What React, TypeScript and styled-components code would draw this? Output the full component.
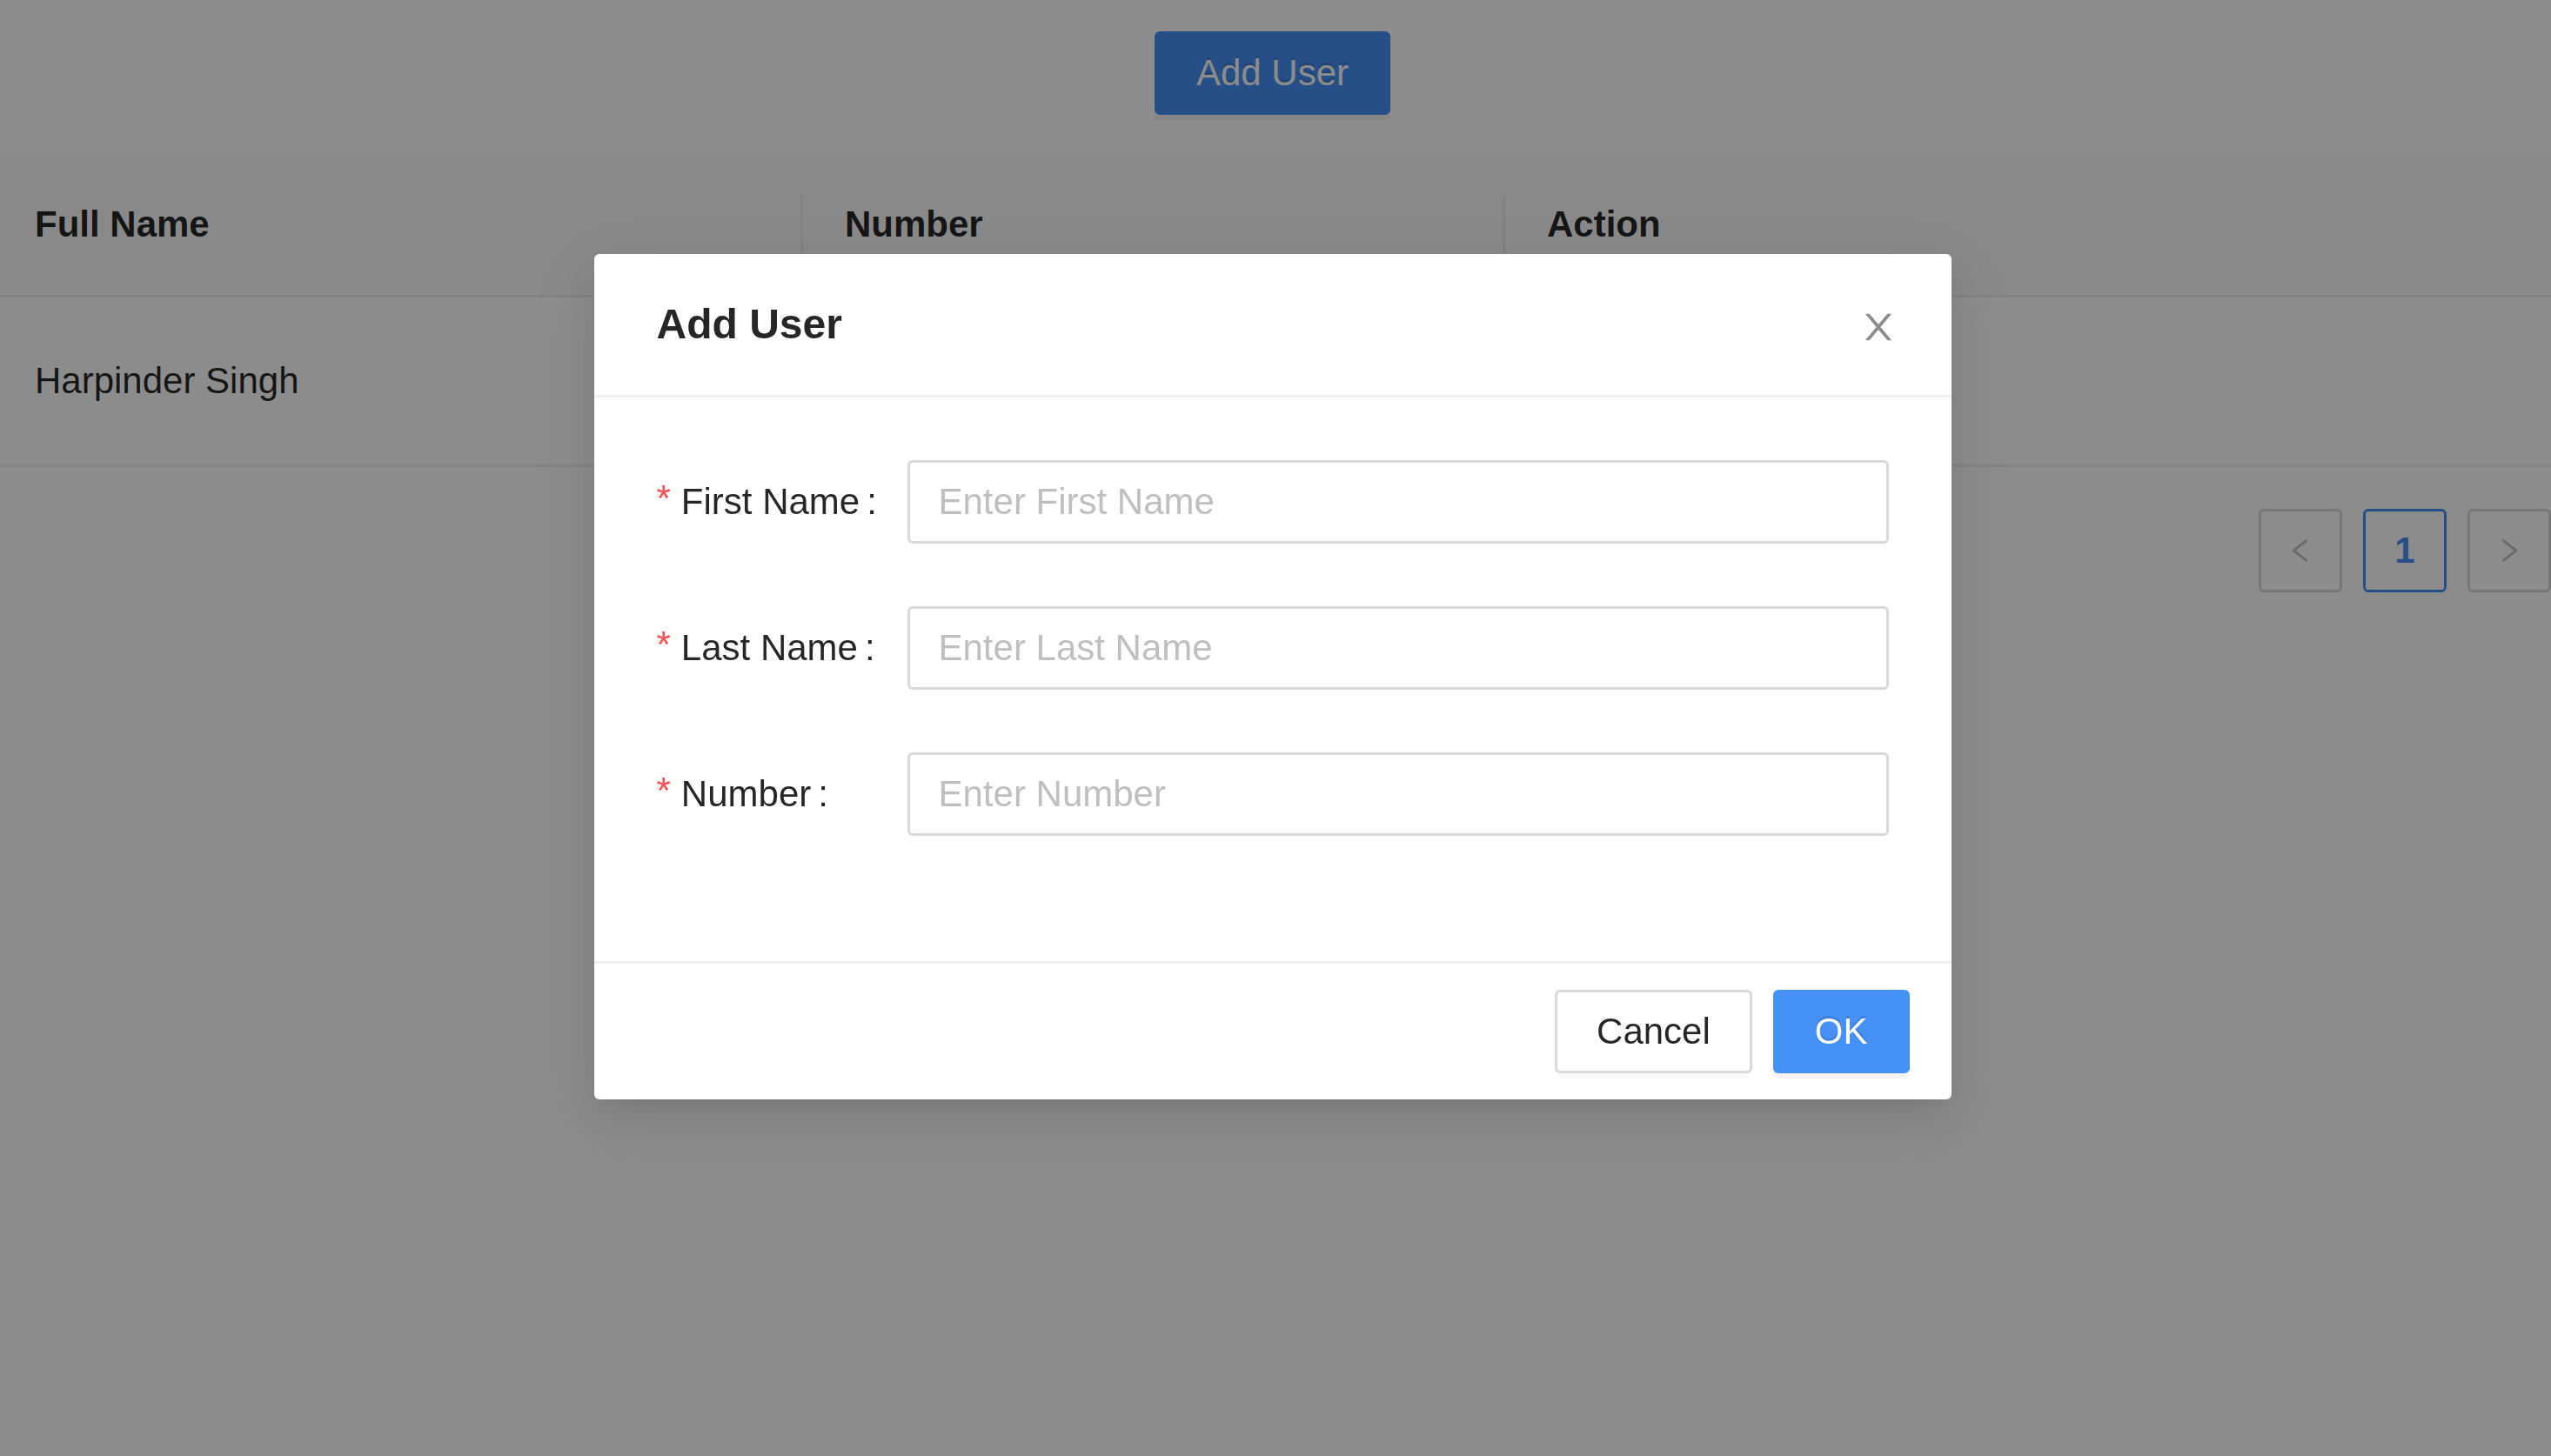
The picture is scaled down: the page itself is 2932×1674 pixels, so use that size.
import React from "react";
import styled, { createGlobalStyle } from "styled-components";

const PRIMARY = "#4691f6";

const GlobalStyle = createGlobalStyle`
  html, body {
    margin: 0;
    padding: 0;
    background: #ffffff;
  }
  body {
    font-family: "Liberation Sans", Arial, Helvetica, sans-serif;
    font-size: 42px;
    line-height: 1.5715;
    color: rgba(0, 0, 0, 0.85);
    overflow: hidden;
  }
  * { box-sizing: border-box; }
`;

const Page = styled.div`
  width: 100%;
  min-height: 100vh;
  background: #ffffff;
`;

const TopBar = styled.div`
  display: flex;
  justify-content: center;
  padding: 36px 7px 0 0;
  margin-bottom: 45px;
`;

const Button = styled.button<{ $primary?: boolean }>`
  height: 96px;
  padding: 0 45px;
  font-family: inherit;
  font-size: 42px;
  line-height: 1;
  border-radius: 6px;
  border: 3px solid ${(p) => (p.$primary ? PRIMARY : "#d9d9d9")};
  background: ${(p) => (p.$primary ? PRIMARY : "#ffffff")};
  color: ${(p) => (p.$primary ? "#ffffff" : "rgba(0,0,0,0.85)")};
  text-shadow: ${(p) => (p.$primary ? "0 -3px 0 rgba(0,0,0,0.12)" : "none")};
  box-shadow: ${(p) =>
    p.$primary ? "0 6px 0 rgba(0,0,0,0.045)" : "0 6px 0 rgba(0,0,0,0.015)"};
  cursor: pointer;
  white-space: nowrap;
`;

const LinkButton = styled.button`
  height: 96px;
  padding: 0 45px;
  font-family: inherit;
  font-size: 42px;
  border: 3px solid #d9d9d9;
  border-radius: 6px;
  background: #fff;
  color: rgba(0, 0, 0, 0.85);
`;

const Table = styled.table`
  width: 100%;
  border-collapse: separate;
  border-spacing: 0;
  table-layout: fixed;
`;

const Th = styled.th<{ $divider?: boolean }>`
  position: relative;
  text-align: left;
  padding: 48px;
  font-size: 42px;
  line-height: 66px;
  font-weight: 700;
  color: rgba(0, 0, 0, 0.85);
  background: #fafafa;
  border-bottom: 3px solid #f0f0f0;

  &:first-child {
    padding-left: 40px;
  }

  &::before {
    content: "";
    display: ${(p) => (p.$divider ? "block" : "none")};
    position: absolute;
    top: 50%;
    right: 0;
    width: 3px;
    height: 1.6em;
    transform: translateY(-50%);
    background: rgba(0, 0, 0, 0.06);
  }
`;

const Td = styled.td`
  padding: 48px;
  font-size: 42px;
  line-height: 66px;
  height: 195px;
  color: rgba(0, 0, 0, 0.85);
  border-bottom: 3px solid #f0f0f0;

  &:first-child {
    padding-left: 40px;
  }
`;

const Actions = styled.div`
  display: flex;
  gap: 24px;
`;

const Pagination = styled.ul`
  display: flex;
  justify-content: flex-end;
  gap: 24px;
  list-style: none;
  margin: 48px 0;
  padding: 0;
`;

const PageItem = styled.li<{ $active?: boolean }>`
  width: 96px;
  height: 96px;
  display: flex;
  align-items: center;
  justify-content: center;
  border: 3px solid ${(p) => (p.$active ? PRIMARY : "#d9d9d9")};
  border-radius: 6px;
  font-size: 42px;
  font-weight: ${(p) => (p.$active ? 700 : 400)};
  color: ${(p) => (p.$active ? PRIMARY : "rgba(0,0,0,0.25)")};
  background: #fff;
`;

const Mask = styled.div`
  position: fixed;
  inset: 0;
  background: rgba(0, 0, 0, 0.45);
`;

const ModalWrap = styled.div`
  position: fixed;
  inset: 0;
  display: flex;
  justify-content: center;
  align-items: flex-start;
  padding: 292px 7px 0 0;
`;

const Modal = styled.div`
  position: relative;
  width: 1560px;
  background: #ffffff;
  border-radius: 6px;
  box-shadow: 0 9px 18px -12px rgba(0, 0, 0, 0.12),
    0 18px 48px 0 rgba(0, 0, 0, 0.08), 0 27px 84px 24px rgba(0, 0, 0, 0.05);
`;

const ModalHeader = styled.div`
  padding: 48px 72px;
  border-bottom: 3px solid #f0f0f0;
`;

const ModalTitle = styled.div`
  font-size: 48px;
  line-height: 66px;
  font-weight: 700;
  color: rgba(0, 0, 0, 0.85);
`;

const CloseButton = styled.button`
  position: absolute;
  top: 0;
  right: 0;
  width: 168px;
  height: 168px;
  display: flex;
  align-items: center;
  justify-content: center;
  background: transparent;
  border: 0;
  padding: 0;
  color: rgba(0, 0, 0, 0.45);
  cursor: pointer;
`;

const ModalBody = styled.div`
  padding: 72px;
`;

const FormItem = styled.div`
  display: flex;
  align-items: center;
  height: 96px;
  margin-bottom: 72px;
`;

const Label = styled.label`
  width: 288px;
  flex: none;
  display: flex;
  align-items: center;
  font-size: 42px;
  color: rgba(0, 0, 0, 0.85);
  white-space: nowrap;
`;

const Required = styled.span`
  display: inline-block;
  margin-right: 12px;
  color: #ff4d4f;
  font-size: 42px;
  line-height: 1;
  font-family: "Liberation Sans", sans-serif;
  align-self: flex-start;
  margin-top: 8px;
`;

const Colon = styled.span`
  margin: 0 24px 0 8px;
`;

const Input = styled.input`
  flex: 1;
  min-width: 0;
  height: 96px;
  padding: 0 33px;
  font-family: inherit;
  font-size: 42px;
  color: rgba(0, 0, 0, 0.85);
  border: 3px solid #d9d9d9;
  border-radius: 6px;
  background: #fff;
  outline: none;

  &::placeholder {
    color: #bfbfbf;
  }
`;

const ModalFooter = styled.div`
  display: flex;
  justify-content: flex-end;
  gap: 24px;
  padding: 30px 48px;
  border-top: 3px solid #f0f0f0;
`;

const CloseIcon = () => (
  <svg width="48" height="48" viewBox="0 0 1024 1024" fill="currentColor">
    <path d="M563.8 512l262.5-312.9c4.4-5.2.7-13.1-6.1-13.1h-79.8c-4.7 0-9.2 2.1-12.3 5.7L511.6 449.8 295.1 191.7c-3-3.6-7.5-5.7-12.3-5.7H203c-6.8 0-10.5 7.9-6.1 13.1L459.4 512 196.9 824.9A7.95 7.95 0 00203 838h79.8c4.7 0 9.2-2.1 12.3-5.7l216.5-258.1 216.5 258.1c3 3.6 7.5 5.7 12.3 5.7h79.8c6.8 0 10.5-7.9 6.1-13.1L563.8 512z" />
  </svg>
);

const LeftIcon = () => (
  <svg width="36" height="36" viewBox="0 0 1024 1024" fill="currentColor">
    <path d="M724 218.3V141c0-6.7-7.7-10.4-12.9-6.3L260.3 486.8a31.86 31.86 0 000 50.3l450.8 352.1c5.3 4.1 12.9.4 12.9-6.3v-77.3c0-4.9-2.3-9.6-6.1-12.6L360 512l357.9-279.1c3.8-3 6.1-7.7 6.1-12.6z" />
  </svg>
);

const RightIcon = () => (
  <svg width="36" height="36" viewBox="0 0 1024 1024" fill="currentColor">
    <path d="M765.7 486.8L314.9 134.7A7.97 7.97 0 00302 141v77.3c0 4.9 2.3 9.6 6.1 12.6l360 281.1-360 281.1c-3.9 3-6.1 7.7-6.1 12.6V883c0 6.7 7.7 10.4 12.9 6.3l450.8-352.1a31.960 31.960 0 000-50.4z" />
  </svg>
);

const fields = [
  { label: "First Name", placeholder: "Enter First Name" },
  { label: "Last Name", placeholder: "Enter Last Name" },
  { label: "Number", placeholder: "Enter Number" },
];

export default function App() {
  return (
    <>
      <GlobalStyle />
      <Page>
        <TopBar>
          <Button $primary>Add User</Button>
        </TopBar>
        <Table>
          <colgroup>
            <col style={{ width: 923 }} />
            <col style={{ width: 807 }} />
            <col />
          </colgroup>
          <thead>
            <tr>
              <Th $divider>Full Name</Th>
              <Th $divider>Number</Th>
              <Th>Action</Th>
            </tr>
          </thead>
          <tbody>
            <tr>
              <Td>Harpinder Singh</Td>
              <Td>9876543210</Td>
              <Td>
                <Actions>
                  <LinkButton>Edit</LinkButton>
                  <LinkButton>Delete</LinkButton>
                </Actions>
              </Td>
            </tr>
          </tbody>
        </Table>
        <Pagination>
          <PageItem>
            <LeftIcon />
          </PageItem>
          <PageItem $active>1</PageItem>
          <PageItem>
            <RightIcon />
          </PageItem>
        </Pagination>
      </Page>

      <Mask />
      <ModalWrap>
        <Modal>
          <CloseButton aria-label="Close">
            <CloseIcon />
          </CloseButton>
          <ModalHeader>
            <ModalTitle>Add User</ModalTitle>
          </ModalHeader>
          <ModalBody>
            {fields.map((f) => (
              <FormItem key={f.label}>
                <Label>
                  <Required>*</Required>
                  {f.label}
                  <Colon>:</Colon>
                </Label>
                <Input placeholder={f.placeholder} />
              </FormItem>
            ))}
          </ModalBody>
          <ModalFooter>
            <Button>Cancel</Button>
            <Button $primary>OK</Button>
          </ModalFooter>
        </Modal>
      </ModalWrap>
    </>
  );
}
